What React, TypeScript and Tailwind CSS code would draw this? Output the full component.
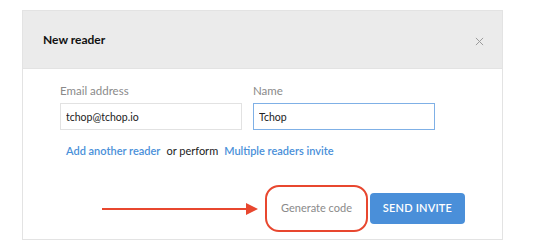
import React from 'react'

const font = { fontFamily: 'Lato, "Open Sans", sans-serif' }

const App = () => {
  return (
    <div className="w-[550px] h-[250px] bg-white pt-[10px] pl-[22px]" style={font}>
      <div className="w-[481px] h-[230px] border border-[#e3e3e3] bg-white flex flex-col">
        {/* header */}
        <div className="h-[58px] bg-[#ebebeb] border-b border-[#e3e3e3] flex items-center justify-between pl-[20px] pr-[18px]">
          <h3 className="text-[12px] font-bold text-[#111] pt-[1px]">New reader</h3>
          <svg width="9" height="9" viewBox="0 0 10 10" className="mt-[4px]">
            <path d="M1 1L9 9M9 1L1 9" stroke="#9a9a9a" strokeWidth="1.1" />
          </svg>
        </div>

        {/* body */}
        <div className="flex flex-col pl-[37px] pr-[37px] pt-[14px]">
          <div className="flex gap-[11px]">
            <div className="flex flex-col">
              <label className="text-[11.5px] leading-[16px] text-[#8a8a8a]">Email address</label>
              <input
                defaultValue="tchop@tchop.io"
                className="mt-[4px] w-[182px] h-[27px] border border-[#e2e2e2] px-[5px] text-[10.5px] text-[#222] outline-none"
                style={font}
              />
            </div>
            <div className="flex flex-col">
              <label className="text-[11.5px] leading-[16px] text-[#8a8a8a]">Name</label>
              <input
                defaultValue="Tchop"
                className="mt-[4px] w-[182px] h-[27px] border border-[#7fb0e6] px-[5px] text-[10.5px] text-[#222] outline-none"
                style={font}
              />
            </div>
          </div>

          <div className="mt-[13px] pl-[6px] flex items-center gap-[6px] text-[11px] leading-[16px]">
            <a className="text-[#4a90d9] font-semibold cursor-pointer">Add another reader</a>
            <span className="text-[#222]">or perform</span>
            <a className="text-[#4a90d9] font-semibold cursor-pointer">Multiple readers invite</a>
          </div>

          <div className="mt-[26px] flex items-center justify-end gap-[2px]">
            <svg width="156" height="12" viewBox="0 0 156 12" className="mr-[5px]">
              <line x1="0" y1="6" x2="146" y2="6" stroke="#e8472f" strokeWidth="2" />
              <path d="M144 0L156 6L144 12Z" fill="#e8472f" />
            </svg>
            <button className="w-[103px] h-[47px] rounded-[14px] border-2 border-[#e8472f] text-[11px] text-[#8a8a8a] bg-white">
              Generate code
            </button>
            <button className="w-[95px] h-[31px] rounded-[4px] bg-[#4a8fd9] text-white text-[11px] font-semibold tracking-[0.2px]">
              SEND INVITE
            </button>
          </div>
        </div>
      </div>
    </div>
  )
}

export default App
